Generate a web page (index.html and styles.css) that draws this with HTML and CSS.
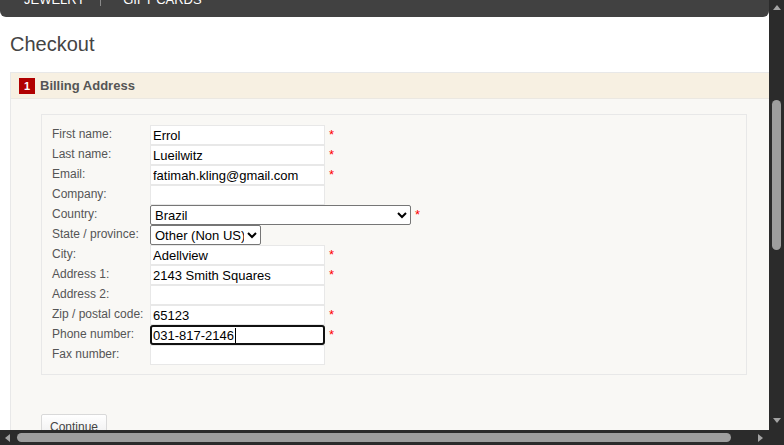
FILE: index.html
```html
<!DOCTYPE html>
<html lang="en">
<head>
<meta charset="utf-8">
<title>Checkout</title>
<link rel="stylesheet" href="styles.css">
</head>
<body>
<div class="window">
  <div class="viewport" id="viewport">
    <div class="page">
      <header class="header">
        <div class="logo">nopCommerce</div>
        <div class="header-links">Register | Log in | Shopping cart (2) | Wishlist (0)</div>
      </header>
      <nav class="menu" id="menu">
        <ul class="menu-row">
          <li>COMPUTERS</li><li class="sep"></li>
          <li>ELECTRONICS</li><li class="sep"></li>
          <li>APPAREL &amp; SHOES</li><li class="sep"></li>
          <li>DIGITAL DOWNLOADS</li><li class="sep"></li>
          <li>BOOKS</li><li class="sep"></li>
        </ul>
        <ul class="menu-row">
          <li class="jewelry">JEWELRY</li><li class="sep"></li>
          <li class="gift">GIFT CARDS</li>
        </ul>
      </nav>
      <main class="content">
        <h1 class="title">Checkout</h1>
        <section class="step">
          <div class="step-head"><span class="num">1</span><h2 class="step-title">Billing Address</h2></div>
          <div class="step-body">
            <div class="fields">
              <div class="row"><label class="lbl">First name:</label><input class="txt" type="text" value="Errol"><span class="req">*</span></div>
              <div class="row"><label class="lbl">Last name:</label><input class="txt" type="text" value="Lueilwitz"><span class="req">*</span></div>
              <div class="row"><label class="lbl">Email:</label><input class="txt" type="text" value="fatimah.kling@gmail.com"><span class="req">*</span></div>
              <div class="row"><label class="lbl">Company:</label><input class="txt" type="text" value=""></div>
              <div class="row"><label class="lbl">Country:</label><select class="sel country"><option>Brazil</option></select><span class="req">*</span></div>
              <div class="row"><label class="lbl">State / province:</label><select class="sel state"><option>Other (Non US)</option></select></div>
              <div class="row"><label class="lbl">City:</label><input class="txt" type="text" value="Adellview"><span class="req">*</span></div>
              <div class="row"><label class="lbl">Address 1:</label><input class="txt" type="text" value="2143 Smith Squares"><span class="req">*</span></div>
              <div class="row"><label class="lbl">Address 2:</label><input class="txt" type="text" value=""></div>
              <div class="row"><label class="lbl">Zip / postal code:</label><input class="txt" type="text" value="65123"><span class="req">*</span></div>
              <div class="row"><label class="lbl">Phone number:</label><span class="focus-wrap"><input class="txt focused" id="phone" type="text" value="031-817-2146"><span class="caret" id="caret"></span></span><span class="req">*</span></div>
              <div class="row"><label class="lbl">Fax number:</label><input class="txt" type="text" value=""></div>
            </div>
            <button class="continue" type="button">Continue</button>
          </div>
        </section>
        <section class="step step-closed">
          <div class="step-head"><span class="num">2</span><h2 class="step-title">Shipping Address</h2></div>
        </section>
        <section class="step step-closed">
          <div class="step-head"><span class="num">3</span><h2 class="step-title">Shipping Method</h2></div>
        </section>
        <section class="step step-closed">
          <div class="step-head"><span class="num">4</span><h2 class="step-title">Payment Method</h2></div>
        </section>
        <section class="step step-closed">
          <div class="step-head"><span class="num">5</span><h2 class="step-title">Payment Information</h2></div>
        </section>
        <section class="step step-closed">
          <div class="step-head"><span class="num">6</span><h2 class="step-title">Confirm Order</h2></div>
        </section>
      </main>
      <footer class="footer">Powered by nopCommerce</footer>
    </div>
  </div>
  <div class="vbar">
    <span class="arrow arrow-up"></span>
    <span class="vthumb"></span>
    <span class="bar-fill"></span>
    <span class="arrow arrow-down"></span>
  </div>
  <div class="hbar">
    <span class="arrow arrow-left"></span>
    <span class="hthumb"></span>
    <span class="bar-fill"></span>
    <span class="arrow arrow-right"></span>
  </div>
  <div class="corner"></div>
</div>
<script src="script.js"></script>
</body>
</html>
```
FILE: styles.css
```css
* { box-sizing: border-box; }
html, body { margin: 0; padding: 0; }
body {
  background: #2b2b2b;
  font-family: "Liberation Sans", Arial, sans-serif;
  overflow: hidden;
}
.window {
  display: grid;
  grid-template-columns: 769px 15px;
  grid-template-rows: 430px 15px;
  width: 784px;
  height: 445px;
}
.viewport {
  overflow: hidden;
  background: #fff;
}
.page {
  width: 769px;
}
.header {
  height: 150px;
  display: flex;
  justify-content: space-between;
  align-items: center;
  padding: 0 20px;
  color: #555;
  font-size: 12px;
}
.logo { font-size: 28px; font-weight: bold; color: #333; }

.menu {
  background: #414141;
  border-radius: 0 0 6px 6px;
  padding: 8px 0 8px 24px;
  color: #fff;
  font-size: 13px;
}
.menu-row {
  list-style: none;
  margin: 0;
  padding: 0;
  display: flex;
  align-items: center;
  line-height: 18px;
  height: 18px;
}
.menu-row li { white-space: nowrap; }
.menu-row .sep {
  width: 1px;
  height: 12px;
  background: #8a8a8a;
  margin: 0 15px;
}
.menu-row .jewelry + .sep { margin: 0 22px 0 15px; }

.content {
  width: 798px;
  padding: 0 20px 30px 10px;
}
.title {
  margin: 15px 0 16px;
  font-size: 20px;
  line-height: 24px;
  font-weight: normal;
  color: #444;
}
.step {
  border: 1px solid #e8e8e8;
  margin-bottom: 6px;
}
.step-head {
  display: flex;
  align-items: center;
  gap: 5px;
  height: 26px;
  padding-left: 8px;
  background: #f7f0e2;
  border-bottom: 1px solid #ebe8e2;
}
.num {
  width: 16px;
  height: 16px;
  background: #b10000;
  color: #fff;
  font-size: 11px;
  font-weight: bold;
  line-height: 16px;
  text-align: center;
}
.step-title {
  margin: 0;
  font-size: 13px;
  font-weight: bold;
  color: #555;
}
.step-body {
  background: #f9f8f5;
  padding: 15px 30px 40px;
}
.fields {
  border: 1px solid #e8e8e8;
  padding: 10px 10px 9px;
}
.row {
  display: flex;
  align-items: flex-start;
  height: 20px;
}
.lbl {
  width: 98px;
  flex: none;
  font-size: 12px;
  line-height: 16px;
  padding-top: 1px;
  color: #555;
}
.txt {
  width: 175px;
  height: 20px;
  margin: 0;
  border: 1px solid #e8e8e8;
  border-radius: 0;
  background: #fff;
  padding: 0 2px;
  font-family: "Liberation Sans", Arial, sans-serif;
  font-size: 13px;
  color: #000;
  outline: none;
}
.focus-wrap {
  position: relative;
  display: block;
  width: 175px;
  height: 20px;
}
.txt.focused {
  border: 2px solid #111;
  border-radius: 3px;
  padding: 0 1px;
}
.caret {
  position: absolute;
  left: 82px;
  top: 3px;
  width: 1px;
  height: 15px;
  background: #000;
}
.req {
  color: #f00;
  font-size: 13px;
  line-height: 20px;
  margin-left: 4px;
}
.sel {
  height: 20px;
  margin: 0;
  border: 1px solid #767676;
  border-radius: 2px;
  background: #fff;
  font-family: "Liberation Sans", Arial, sans-serif;
  font-size: 13px;
  color: #000;
}
.sel.country { width: 261px; }
.sel.state { width: 111px; }
.continue {
  margin-top: 39px;
  height: 26px;
  padding: 0 8px;
  border: 1px solid #d9d9d9;
  border-radius: 2px;
  background: linear-gradient(#ffffff, #ececec);
  font-family: "Liberation Sans", Arial, sans-serif;
  font-size: 12px;
  color: #444;
}
.step-closed { background: #f7f0e2; }
.footer {
  padding: 30px 10px 200px;
  font-size: 12px;
  color: #777;
}

/* scrollbars */
.vbar {
  background: #2b2b2b;
  display: flex;
  flex-direction: column;
  align-items: center;
}
.hbar {
  background: #2b2b2b;
  display: flex;
  align-items: center;
}
.corner { background: #2b2b2b; }
.bar-fill { flex: 1; }
.arrow { width: 0; height: 0; flex: none; }
.arrow-up {
  margin-top: 5px;
  border-left: 4px solid transparent;
  border-right: 4px solid transparent;
  border-bottom: 5px solid #a3a3a3;
}
.arrow-down {
  margin-bottom: 7px;
  border-left: 4px solid transparent;
  border-right: 4px solid transparent;
  border-top: 5px solid #a3a3a3;
}
.arrow-left {
  margin-left: 5px;
  border-top: 4px solid transparent;
  border-bottom: 4px solid transparent;
  border-right: 5px solid #a3a3a3;
}
.arrow-right {
  margin-right: 6px;
  border-top: 4px solid transparent;
  border-bottom: 4px solid transparent;
  border-left: 5px solid #a3a3a3;
}
.vthumb {
  margin-top: 90px;
  width: 9px;
  height: 150px;
  border-radius: 5px;
  background: #9e9e9e;
  flex: none;
}
.hthumb {
  margin-left: 7px;
  width: 714px;
  height: 9px;
  border-radius: 5px;
  background: #9e9e9e;
  flex: none;
}
```
FILE: script.js
```js
(function () {
  var vp = document.getElementById('viewport');
  var menu = document.getElementById('menu');
  var bottom = menu.getBoundingClientRect().bottom - vp.getBoundingClientRect().top + vp.scrollTop;
  vp.scrollTop = bottom - 17;

  var phone = document.getElementById('phone');
  var caret = document.getElementById('caret');
  var ctx = document.createElement('canvas').getContext('2d');
  ctx.font = '13px "Liberation Sans", Arial, sans-serif';
  var w = ctx.measureText(phone.value).width;
  caret.style.left = Math.round(3 + w + 1) + 'px';
})();
```
